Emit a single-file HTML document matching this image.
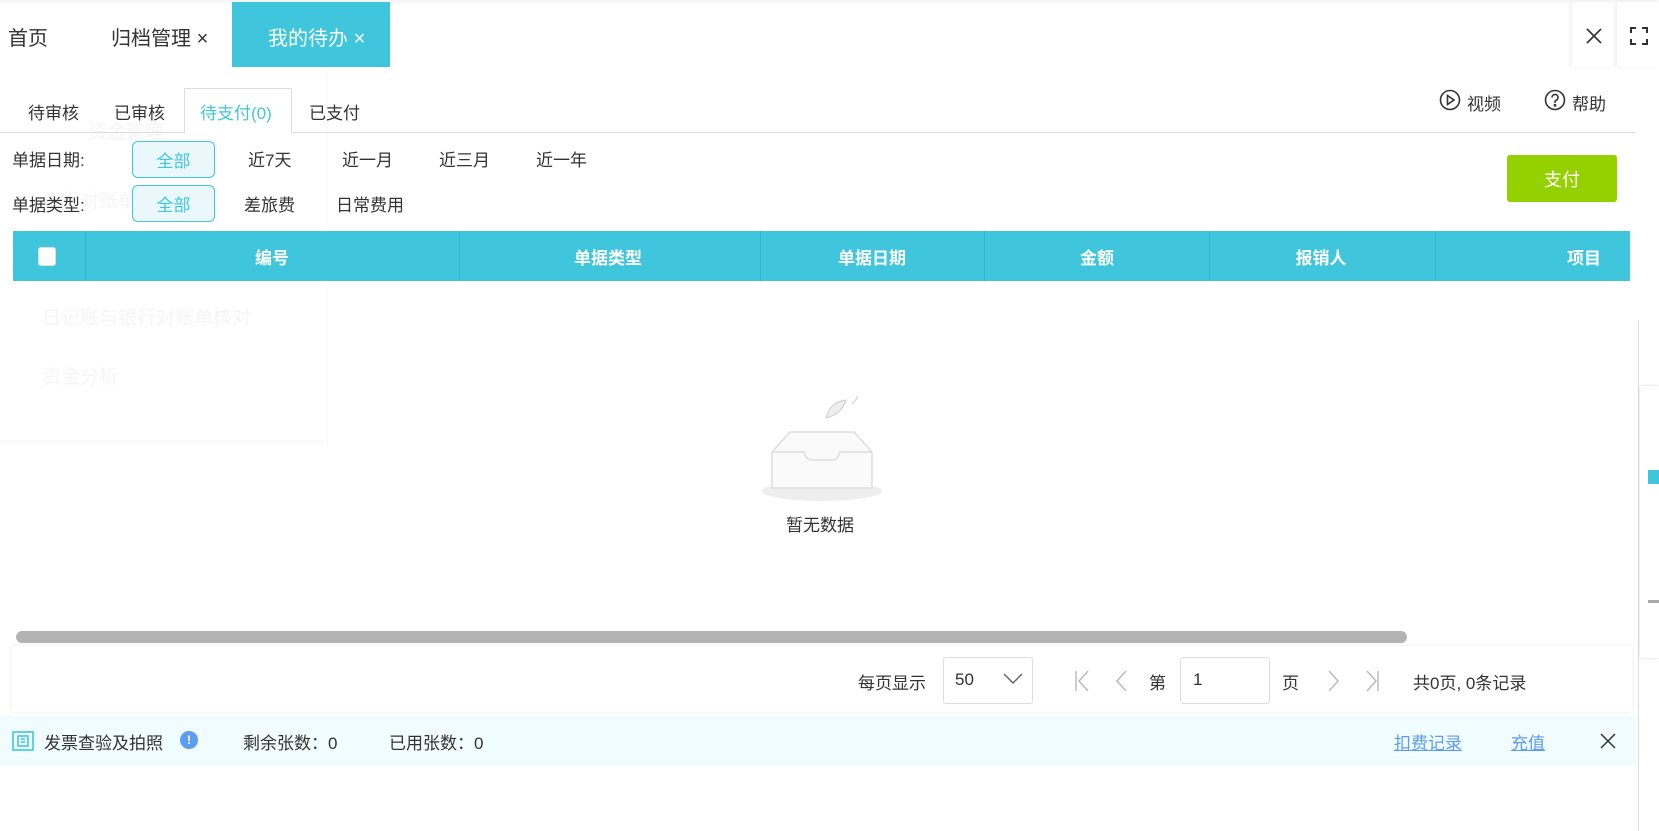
<!DOCTYPE html>
<html><head><meta charset="utf-8"><style>
*{margin:0;padding:0;box-sizing:border-box}
body{width:1659px;height:831px;overflow:hidden;background:#fff;font-family:"Liberation Sans","Noto Sans CJK SC",sans-serif;color:#333;position:relative}
.a{position:absolute;white-space:nowrap}
.t20{font-size:20px}.t17{font-size:17px}.t16{font-size:16px}
.btn{position:absolute;border:1px solid #3fc6dc;background:#eaf8fb;color:#3fc6dc;border-radius:6px;font-size:17px;display:flex;align-items:center;justify-content:center}
.th{position:absolute;top:231px;height:50px;background:#3fc6dc;}
.hl{position:absolute;top:0;height:50px;width:1px;background:#35b3c8}
.hd{position:absolute;top:13px;color:#fff;font-weight:bold;font-size:17px;transform:translateX(-50%)}
.ghost{color:#f5f5f5;font-size:19px}
</style></head><body>
<div class="a" style="left:0;top:0;width:1659px;height:3px;background:#f6f7f9"></div>
<div class="a t20" style="left:8px;top:22px">首页</div>
<div class="a t20" style="left:111px;top:22px">归档管理 <span style="font-size:20px">×</span></div>
<div class="a" style="left:232px;top:2px;width:158px;height:65px;background:#3fc6dc"></div>
<div class="a t20" style="left:268px;top:22px;color:#fff">我的待办 <span>×</span></div>
<div class="a" style="left:1572px;top:2px;width:43px;height:65px;background:#fff;box-shadow:-2px 0 4px rgba(0,0,0,.06)"></div>
<div class="a" style="left:1617px;top:2px;width:42px;height:65px;background:#fff;box-shadow:-2px 0 4px rgba(0,0,0,.06)"></div>
<svg class="a" style="left:1585px;top:27px" width="18" height="18"><path d="M2 2L16 16M16 2L2 16" stroke="#333" stroke-width="1.6"/></svg>
<svg class="a" style="left:1630px;top:27px" width="18" height="18" fill="none" stroke="#333" stroke-width="2"><path d="M1 6V1H6M12 1H17V6M17 12V17H12M6 17H1V12"/></svg>

<div class="a ghost" style="left:88px;top:117px">资金管理</div>
<div class="a ghost" style="left:42px;top:186px">银行对账单</div>
<div class="a ghost" style="left:62px;top:245px">日记账</div>
<div class="a ghost" style="left:42px;top:303px">日记账与银行对账单核对</div>
<div class="a ghost" style="left:42px;top:362px">资金分析</div>
<div class="a" style="left:327px;top:67px;width:1px;height:380px;background:#f9f9f9"></div>
<div class="a" style="left:0;top:440px;width:327px;height:4px;background:#fbfbfb"></div>

<div class="a" style="left:0;top:132px;width:1636px;height:1px;background:#ddd"></div>
<div class="a" style="left:184px;top:88px;width:108px;height:45px;border:1px solid #ddd;border-bottom:none;background:#fff"></div>
<div class="a t17" style="left:28px;top:99px">待审核</div>
<div class="a t17" style="left:114px;top:99px">已审核</div>
<div class="a t17" style="left:200px;top:99px;color:#3fc6dc">待支付(0)</div>
<div class="a t17" style="left:309px;top:99px">已支付</div>
<svg class="a" style="left:1439px;top:89px" width="22" height="22" fill="none" stroke="#333" stroke-width="1.6"><circle cx="11" cy="11" r="9.5"/><path d="M8.5 6.5V15.5L15 11Z"/></svg>
<div class="a t17" style="left:1467px;top:90px">视频</div>
<svg class="a" style="left:1544px;top:89px" width="22" height="22" fill="none" stroke="#333" stroke-width="1.6"><circle cx="11" cy="11" r="9.5"/><path d="M8 8.5a3 3 0 1 1 4 2.8c-.8.4-1 1-1 2v.7"/><circle cx="11" cy="16.3" r=".6" fill="#333"/></svg>
<div class="a t17" style="left:1572px;top:90px">帮助</div>

<div class="a t17" style="left:12px;top:146px">单据日期:</div>
<div class="btn" style="left:132px;top:141px;width:83px;height:37px">全部</div>
<div class="a t17" style="left:248px;top:146px">近7天</div>
<div class="a t17" style="left:342px;top:146px">近一月</div>
<div class="a t17" style="left:439px;top:146px">近三月</div>
<div class="a t17" style="left:536px;top:146px">近一年</div>
<div class="a t17" style="left:12px;top:191px">单据类型:</div>
<div class="btn" style="left:132px;top:185px;width:83px;height:37px">全部</div>
<div class="a t17" style="left:244px;top:191px">差旅费</div>
<div class="a t17" style="left:336px;top:191px">日常费用</div>
<div class="a" style="left:1507px;top:155px;width:110px;height:47px;background:#95d000;border-radius:3px;color:#fff;font-size:18px;display:flex;align-items:center;justify-content:center">支付</div>

<div class="th" style="left:13px;width:1617px">
<div class="hl" style="left:72px"></div><div class="hl" style="left:446px"></div><div class="hl" style="left:747px"></div><div class="hl" style="left:971px"></div><div class="hl" style="left:1196px"></div><div class="hl" style="left:1422px"></div>
<div class="a" style="left:25px;top:16px;width:18px;height:19px;background:#fff;border-radius:3px;border:1px solid #ddd"></div>
<div class="hd" style="left:259px">编号</div>
<div class="hd" style="left:595px">单据类型</div>
<div class="hd" style="left:859px">单据日期</div>
<div class="hd" style="left:1084px">金额</div>
<div class="hd" style="left:1308px">报销人</div>
<div class="hd" style="left:1571px">项目</div>
</div>

<svg class="a" style="left:760px;top:392px" width="124" height="112">
<ellipse cx="62" cy="99" rx="60" ry="10" fill="#eeeeee"/>
<path d="M12 60L30 40H94L112 60V96H12Z" fill="#fafafa" stroke="#ddd" stroke-width="1.5"/>
<path d="M12 60H44Q46 68 52 68H72Q78 68 80 60H112" fill="none" stroke="#ddd" stroke-width="1.5"/>
<path d="M66 26Q70 10 86 8Q82 22 66 26Z" fill="#eee" stroke="#ccc"/>
<path d="M92 12Q96 8 98 4" stroke="#ccc" fill="none"/>
</svg>
<div class="a t17" style="left:786px;top:511px">暂无数据</div>

<div class="a" style="left:16px;top:631px;width:1391px;height:12px;background:#b3b3b3;border-radius:6px"></div>
<div class="a" style="left:12px;top:646px;width:1620px;height:66px;background:#fff;box-shadow:0 0 5px rgba(0,0,0,.08)"></div>
<div class="a t17" style="left:858px;top:669px">每页显示</div>
<div class="a" style="left:943px;top:657px;width:90px;height:47px;border:1px solid #ddd;border-radius:3px"></div>
<div class="a t17" style="left:955px;top:670px">50</div>
<svg class="a" style="left:1003px;top:673px" width="20" height="12"><path d="M1 1L10 10L19 1" fill="none" stroke="#666" stroke-width="1.5"/></svg>
<svg class="a" style="left:1074px;top:670px" width="110" height="22" fill="none" stroke="#bbb" stroke-width="1.5"><path d="M2 1V21M14 1L5 11L14 21M52 1L43 11L52 21"/></svg>
<div class="a t17" style="left:1149px;top:669px">第</div>
<div class="a" style="left:1180px;top:657px;width:90px;height:47px;border:1px solid #ddd;border-radius:3px"></div>
<div class="a t17" style="left:1193px;top:670px">1</div>
<div class="a t17" style="left:1282px;top:669px">页</div>
<svg class="a" style="left:1320px;top:670px" width="60" height="22" fill="none" stroke="#bbb" stroke-width="1.5"><path d="M9 1L18 11L9 21M47 1L56 11L47 21M58 1V21"/></svg>
<div class="a t17" style="left:1413px;top:669px">共0页, 0条记录</div>

<div class="a" style="left:0;top:716px;width:1636px;height:50px;background:#f0fcfd"></div>
<svg class="a" style="left:12px;top:731px" width="22" height="20" fill="none" stroke="#3fc6dc" stroke-width="1.6"><rect x="1" y="1" width="20" height="18"/><rect x="6" y="5" width="10" height="10"/><path d="M9 8H13M9 11H13"/></svg>
<div class="a t17" style="left:44px;top:729px">发票查验及拍照</div>
<div class="a" style="left:180px;top:731px;width:18px;height:18px;border-radius:50%;background:#5c9cf3;color:#fff;font-size:12px;font-weight:bold;text-align:center;line-height:18px">!</div>
<div class="a t17" style="left:243px;top:729px">剩余张数：0</div>
<div class="a t17" style="left:389px;top:729px">已用张数：0</div>
<div class="a t17" style="left:1394px;top:729px;color:#5c9cf3;text-decoration:underline">扣费记录</div>
<div class="a t17" style="left:1511px;top:729px;color:#5c9cf3;text-decoration:underline">充值</div>
<svg class="a" style="left:1600px;top:733px" width="16" height="16"><path d="M1 1L15 15M15 1L1 15" stroke="#333" stroke-width="1.5"/></svg>

<div class="a" style="left:1638px;top:320px;width:1px;height:511px;background:#ddd"></div>
<div class="a" style="left:1640px;top:386px;width:19px;height:272px;background:#fff;box-shadow:0 0 3px rgba(0,0,0,.15)"></div>
<div class="a" style="left:1648px;top:470px;width:11px;height:14px;background:#3fc6dc"></div>
<div class="a" style="left:1648px;top:600px;width:11px;height:3px;background:#aaa"></div>
</body></html>
